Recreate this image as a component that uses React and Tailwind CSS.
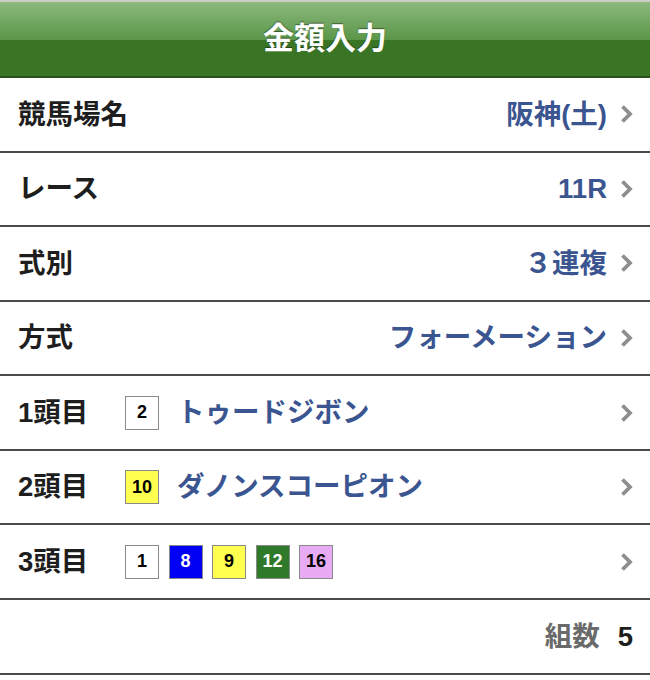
import React from "react";

const FONT = { fontFamily: '"Liberation Sans", "Noto Sans CJK JP", sans-serif' };

function Chevron() {
  return (
    <svg width="15" height="20" viewBox="0 0 15 20" className="shrink-0">
      <polyline points="3.5,2.5 11,10 3.5,17.5" fill="none" stroke="#8e8e8e" strokeWidth="3.8" strokeLinecap="butt" strokeLinejoin="miter" />
    </svg>
  );
}

function Badge({ n, bg, fg }) {
  return (
    <div className={`w-[34px] h-[34px] shrink-0 border-[1.5px] border-[#8a8a8a] flex items-center justify-center text-[18px] font-bold ${bg} ${fg}`}>
      {n}
    </div>
  );
}

function Row({ label, value, children, chevron = true }) {
  return (
    <div className="h-[74.57px] box-border border-b-2 border-[#4a4a4a] flex items-center pl-[18px] pr-[16px]">
      <div className="text-[27.5px] font-bold text-[#1e1e1e] w-[107px] shrink-0 whitespace-nowrap">{label}</div>
      <div className="flex-1 flex items-center min-w-0">{children}</div>
      {value && <div className="text-[27.5px] font-bold text-[#3a5590] mr-[12px] whitespace-nowrap">{value}</div>}
      {chevron && <Chevron />}
    </div>
  );
}

export default function App() {
  return (
    <div className="w-[650px] h-[680px] bg-white overflow-hidden" style={FONT}>
      <div className="h-[78px] relative bg-[#3a7425] border-t-2 border-[#c9cfc6] border-b-2 border-b-[#2a531b] flex items-center justify-center">
        <div className="absolute left-0 right-0 top-0 h-[38px] bg-gradient-to-b from-[#8cb97e] to-[#5a9648]" />
        <div className="relative text-[31px] font-bold text-white [text-shadow:0_-1px_1px_rgba(0,0,0,0.45)]">金額入力</div>
      </div>
      <Row label="競馬場名" value="阪神(土)" />
      <Row label="レース" value="11R" />
      <Row label="式別" value="３連複" />
      <Row label="方式" value="フォーメーション" />
      <Row label="1頭目">
        <div className="flex items-center gap-[18px]">
          <Badge n="2" bg="bg-white" fg="text-black" />
          <span className="text-[27.5px] font-bold text-[#3a5590] whitespace-nowrap">トゥードジボン</span>
        </div>
      </Row>
      <Row label="2頭目">
        <div className="flex items-center gap-[18px]">
          <Badge n="10" bg="bg-[#ffff50]" fg="text-black" />
          <span className="text-[27.5px] font-bold text-[#3a5590] whitespace-nowrap">ダノンスコーピオン</span>
        </div>
      </Row>
      <Row label="3頭目">
        <div className="flex items-center gap-[9.5px]">
          <Badge n="1" bg="bg-white" fg="text-black" />
          <Badge n="8" bg="bg-[#0000f5]" fg="text-white" />
          <Badge n="9" bg="bg-[#ffff50]" fg="text-black" />
          <Badge n="12" bg="bg-[#2f7a2a]" fg="text-white" />
          <Badge n="16" bg="bg-[#e7aaf3]" fg="text-black" />
        </div>
      </Row>
      <div className="h-[74.57px] box-border border-b-2 border-[#4a4a4a] flex items-center justify-end pr-[17px]">
        <span className="text-[27.5px] font-bold text-[#6a6a6a]">組数</span>
        <span className="text-[27.5px] font-bold text-[#1e1e1e] ml-[18px]">5</span>
      </div>
    </div>
  );
}
